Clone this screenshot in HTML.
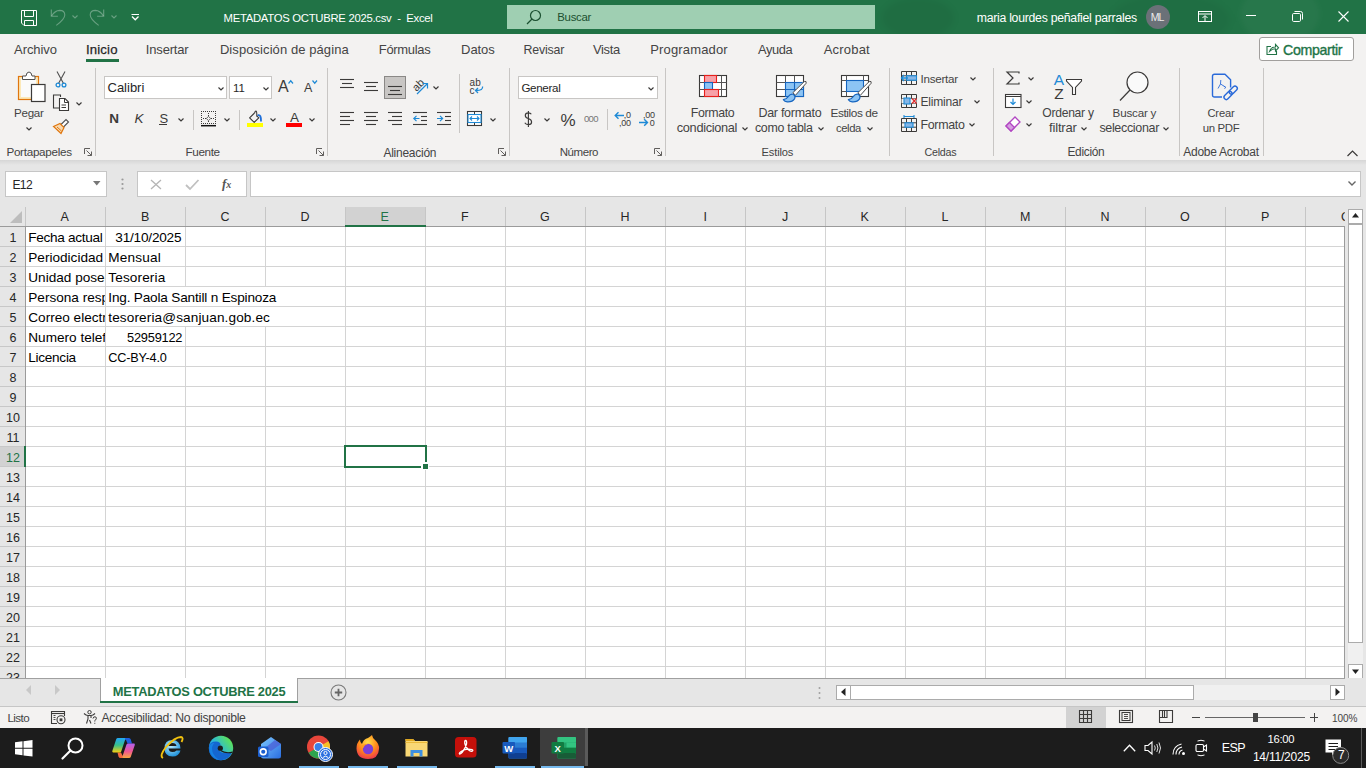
<!DOCTYPE html><html><head><meta charset="utf-8"><style>
html,body{margin:0;padding:0;width:1366px;height:768px;overflow:hidden;background:#f3f2f1}
.a{position:absolute}
.t{position:absolute;font-family:"Liberation Sans",sans-serif;white-space:pre;line-height:1}
svg{overflow:visible}
</style></head><body>
<div class="a" style="left:0px;top:0px;width:1366px;height:34px;background:#217346;"></div>
<div class="a" style="left:0;top:0;width:1366px;height:34px;overflow:hidden"><svg class="a" style="left:860px;top:0px;filter:blur(3px)" width="506" height="33"><ellipse cx="58" cy="18" rx="36" ry="20" fill="rgba(0,0,0,0.05)"/><ellipse cx="310" cy="20" rx="60" ry="26" fill="rgba(0,0,0,0.04)"/><ellipse cx="420" cy="14" rx="40" ry="30" fill="rgba(255,255,255,0.03)"/></svg></div>
<div class="a" style="left:0px;top:34px;width:1366px;height:126px;background:#f3f2f1;"></div>
<div class="a" style="left:0px;top:160px;width:1366px;height:47px;background:#e6e6e6;"></div>
<div class="a" style="left:0px;top:160px;width:1366px;height:5px;background:linear-gradient(#d6d6d6,#e6e6e6);"></div>
<div class="t" style="left:223.50px;top:13.00px;font-size:11.323412698412698px;color:#ffffff;letter-spacing:-0.286px;">METADATOS OCTUBRE 2025.csv  -  Excel</div>
<div class="a" style="left:507px;top:5px;width:368px;height:24px;background:#9fcfb2;"></div>
<div class="t" style="left:557.30px;top:12.00px;font-size:11.414634146341463px;color:#1b4f30;letter-spacing:-0.300px;">Buscar</div>
<div class="t" style="left:976.70px;top:12.00px;font-size:12.273743016759777px;color:#ffffff;letter-spacing:-0.267px;">maria lourdes peñafiel parrales</div>
<div class="a" style="left:1146px;top:5px;width:24px;height:24px;border-radius:50%;background:#6b7178"></div>
<div class="t" style="left:1150.80px;top:12.00px;font-size:10.514705882352942px;color:#ececec;letter-spacing:-1.000px;">ML</div>
<div class="t" style="left:14.10px;top:43.00px;font-size:13px;color:#444444;letter-spacing:-0.083px;">Archivo</div>
<div class="t" style="left:85.90px;top:43.00px;font-size:13.173333333333328px;color:#262626;letter-spacing:0.180px;-webkit-text-stroke:0.25px #262626;">Inicio</div>
<div class="t" style="left:145.80px;top:43.00px;font-size:13px;color:#444444;letter-spacing:-0.171px;">Insertar</div>
<div class="t" style="left:219.90px;top:43.00px;font-size:13px;color:#444444;letter-spacing:0.080px;">Disposición de página</div>
<div class="t" style="left:378.80px;top:44.00px;font-size:12.97636363636364px;color:#444444;letter-spacing:-0.314px;">Fórmulas</div>
<div class="t" style="left:461.10px;top:43.00px;font-size:13px;color:#444444;letter-spacing:-0.075px;">Datos</div>
<div class="t" style="left:523.40px;top:44.00px;font-size:12.39333333333334px;color:#444444;letter-spacing:-0.150px;">Revisar</div>
<div class="t" style="left:593.00px;top:44.00px;font-size:12.955172413793123px;color:#444444;letter-spacing:-0.325px;">Vista</div>
<div class="t" style="left:650.30px;top:43.00px;font-size:13px;color:#444444;letter-spacing:0.150px;">Programador</div>
<div class="t" style="left:758.00px;top:44.00px;font-size:12.859459459459453px;color:#444444;letter-spacing:-0.400px;">Ayuda</div>
<div class="t" style="left:823.70px;top:43.00px;font-size:13px;color:#444444;letter-spacing:0.200px;">Acrobat</div>
<div class="a" style="left:86px;top:59px;width:33px;height:3px;background:#217346;"></div>
<div class="a" style="left:1259px;top:37px;width:93px;height:22px;border:1px solid #a19f9d;border-radius:3px;background:#ffffff"></div>
<div class="t" style="left:1283.00px;top:43.00px;font-size:14.20546875px;color:#217346;letter-spacing:-0.338px;-webkit-text-stroke:0.35px #217346;">Compartir</div>
<div class="t" style="left:6.40px;top:146.00px;font-size:11.689189189189188px;color:#444444;letter-spacing:-0.282px;">Portapapeles</div>
<div class="t" style="left:185.50px;top:146.00px;font-size:11.73076923076923px;color:#444444;letter-spacing:-0.380px;">Fuente</div>
<div class="t" style="left:383.40px;top:147.00px;font-size:11.982758620689664px;color:#444444;letter-spacing:-0.233px;">Alineación</div>
<div class="t" style="left:559.70px;top:147.00px;font-size:11.499999999999995px;color:#444444;letter-spacing:-0.420px;">Número</div>
<div class="t" style="left:761.60px;top:147.00px;font-size:11.118421052631577px;color:#444444;letter-spacing:-0.167px;">Estilos</div>
<div class="t" style="left:924.60px;top:147.00px;font-size:10.687499999999979px;color:#444444;letter-spacing:-0.260px;">Celdas</div>
<div class="t" style="left:1067.40px;top:147.00px;font-size:11.920731707317058px;color:#444444;letter-spacing:-0.283px;">Edición</div>
<div class="t" style="left:1183.20px;top:146.00px;font-size:12.003012048192756px;color:#444444;letter-spacing:-0.242px;">Adobe Acrobat</div>
<div class="a" style="left:95px;top:68px;width:1px;height:88px;background:#c8c6c4;"></div>
<div class="a" style="left:327px;top:68px;width:1px;height:88px;background:#c8c6c4;"></div>
<div class="a" style="left:509px;top:68px;width:1px;height:88px;background:#c8c6c4;"></div>
<div class="a" style="left:665px;top:68px;width:1px;height:88px;background:#c8c6c4;"></div>
<div class="a" style="left:889px;top:68px;width:1px;height:88px;background:#c8c6c4;"></div>
<div class="a" style="left:993px;top:68px;width:1px;height:88px;background:#c8c6c4;"></div>
<div class="a" style="left:1179px;top:68px;width:1px;height:88px;background:#c8c6c4;"></div>
<div class="a" style="left:1263px;top:68px;width:1px;height:88px;background:#c8c6c4;"></div>
<div class="t" style="left:14.00px;top:108.00px;font-size:11.588571428571427px;color:#444444;letter-spacing:-0.250px;">Pegar</div>
<div class="t" style="left:690.80px;top:107.00px;font-size:12.377083333333358px;color:#444444;letter-spacing:-0.350px;">Formato</div>
<div class="t" style="left:676.80px;top:122.00px;font-size:12.760000000000014px;color:#444444;letter-spacing:-0.320px;">condicional</div>
<div class="t" style="left:758.40px;top:107.00px;font-size:12.4913043478261px;color:#444444;letter-spacing:-0.270px;">Dar formato</div>
<div class="t" style="left:754.90px;top:122.00px;font-size:12.410937499999996px;color:#444444;letter-spacing:-0.289px;">como tabla</div>
<div class="t" style="left:830.50px;top:108.00px;font-size:11.839285714285705px;color:#444444;letter-spacing:-0.411px;">Estilos de</div>
<div class="t" style="left:835.90px;top:123.00px;font-size:11.253124999999999px;color:#444444;letter-spacing:-0.375px;">celda</div>
<div class="t" style="left:1042.30px;top:107.00px;font-size:12.148275862068955px;color:#444444;letter-spacing:-0.275px;">Ordenar y</div>
<div class="t" style="left:1049.00px;top:121.00px;font-size:13px;color:#444444;letter-spacing:-0.167px;">filtrar</div>
<div class="t" style="left:1112.60px;top:107.00px;font-size:11.649019607843174px;color:#444444;letter-spacing:-0.200px;">Buscar y</div>
<div class="t" style="left:1099.40px;top:122.00px;font-size:12.52727272727271px;color:#444444;letter-spacing:-0.340px;">seleccionar</div>
<div class="t" style="left:1207.50px;top:108.00px;font-size:11.187878787878805px;color:#444444;letter-spacing:-0.200px;">Crear</div>
<div class="t" style="left:1202.80px;top:123.00px;font-size:11.434090909090923px;color:#444444;letter-spacing:-0.360px;">un PDF</div>
<div class="t" style="left:920.50px;top:73.00px;font-size:11.642222222222237px;color:#444444;letter-spacing:-0.257px;">Insertar</div>
<div class="t" style="left:920.50px;top:96.00px;font-size:12.052083333333329px;color:#444444;letter-spacing:-0.229px;">Eliminar</div>
<div class="t" style="left:920.50px;top:119.00px;font-size:12.431250000000006px;color:#444444;letter-spacing:-0.317px;">Formato</div>
<div class="a" style="left:104px;top:76px;width:121px;height:21px;border:1px solid #c8c6c4;background:#fff"></div>
<div class="a" style="left:229px;top:76px;width:41px;height:21px;border:1px solid #c8c6c4;background:#fff"></div>
<div class="a" style="left:518px;top:76px;width:138px;height:21px;border:1px solid #c8c6c4;background:#fff"></div>
<div class="t" style="left:107.50px;top:81.00px;font-size:13px;color:#262626;">Calibri</div>
<div class="t" style="left:233.00px;top:83.00px;font-size:11.421428571428573px;color:#262626;">11</div>
<div class="t" style="left:521.40px;top:83.00px;font-size:11.58695652173913px;color:#262626;letter-spacing:-0.300px;">General</div>
<div class="a" style="left:5px;top:171px;width:100px;height:24px;border:1px solid #c6c6c6;background:#fff"></div>
<div class="t" style="left:12.40px;top:179.00px;font-size:12.095652173913045px;color:#262626;letter-spacing:-0.600px;">E12</div>
<div class="a" style="left:137px;top:171px;width:108px;height:24px;border:1px solid #c6c6c6;background:#fff"></div>
<div class="a" style="left:250px;top:171px;width:1109px;height:24px;border:1px solid #c6c6c6;background:#fff"></div>
<div class="a" style="left:0px;top:207px;width:1345px;height:20px;background:#e6e6e6;"></div>
<div class="a" style="left:26px;top:227px;width:1319px;height:451px;background:#ffffff;"></div>
<div class="a" style="left:26px;top:227px;width:1319px;height:451px;background:repeating-linear-gradient(to right,transparent 0 79px,#d4d4d4 79px 80px),repeating-linear-gradient(to bottom,transparent 0 19px,#d4d4d4 19px 20px);"></div>
<div class="a" style="left:0px;top:227px;width:25px;height:451px;background:#e6e6e6;"></div>
<div class="a" style="left:0px;top:227px;width:25px;height:451px;background:repeating-linear-gradient(to bottom,transparent 0 19px,#c8c8c8 19px 20px);"></div>
<div class="a" style="left:25px;top:207px;width:1px;height:19px;background:#c6c6c6;"></div>
<div class="a" style="left:25px;top:226px;width:1px;height:452px;background:#9b9b9b;"></div>
<div class="a" style="left:0px;top:226px;width:1345px;height:1px;background:#9b9b9b;"></div>
<div class="a" style="left:1344px;top:227px;width:1px;height:451px;background:#9b9b9b;"></div>
<div class="a" style="left:105px;top:207px;width:1px;height:19px;background:#c6c6c6;"></div>
<div class="a" style="left:185px;top:207px;width:1px;height:19px;background:#c6c6c6;"></div>
<div class="a" style="left:265px;top:207px;width:1px;height:19px;background:#c6c6c6;"></div>
<div class="a" style="left:345px;top:207px;width:1px;height:19px;background:#c6c6c6;"></div>
<div class="a" style="left:425px;top:207px;width:1px;height:19px;background:#c6c6c6;"></div>
<div class="a" style="left:505px;top:207px;width:1px;height:19px;background:#c6c6c6;"></div>
<div class="a" style="left:585px;top:207px;width:1px;height:19px;background:#c6c6c6;"></div>
<div class="a" style="left:665px;top:207px;width:1px;height:19px;background:#c6c6c6;"></div>
<div class="a" style="left:745px;top:207px;width:1px;height:19px;background:#c6c6c6;"></div>
<div class="a" style="left:825px;top:207px;width:1px;height:19px;background:#c6c6c6;"></div>
<div class="a" style="left:905px;top:207px;width:1px;height:19px;background:#c6c6c6;"></div>
<div class="a" style="left:985px;top:207px;width:1px;height:19px;background:#c6c6c6;"></div>
<div class="a" style="left:1065px;top:207px;width:1px;height:19px;background:#c6c6c6;"></div>
<div class="a" style="left:1145px;top:207px;width:1px;height:19px;background:#c6c6c6;"></div>
<div class="a" style="left:1225px;top:207px;width:1px;height:19px;background:#c6c6c6;"></div>
<div class="a" style="left:1305px;top:207px;width:1px;height:19px;background:#c6c6c6;"></div>
<svg class="a" style="left:10px;top:211px;" width="13" height="13" viewBox="0 0 13 13"><path d="M12 0 L12 12 L0 12 Z" fill="#bdbdbd"/></svg>
<div class="a" style="left:346px;top:207px;width:79px;height:19px;background:#d2d2d2;"></div>
<div class="a" style="left:345px;top:225px;width:81px;height:2px;background:#217346;"></div>
<div class="a" style="left:0px;top:447px;width:25px;height:19px;background:#d2d2d2;"></div>
<div class="a" style="left:24px;top:446px;width:2px;height:21px;background:#217346;"></div>
<div class="t" style="left:60.50px;top:211.00px;font-size:12.5px;color:#262626;">A</div>
<div class="t" style="left:141.00px;top:211.00px;font-size:12.5px;color:#262626;">B</div>
<div class="t" style="left:220.50px;top:211.00px;font-size:12.5px;color:#262626;">C</div>
<div class="t" style="left:300.50px;top:211.00px;font-size:12.5px;color:#262626;">D</div>
<div class="t" style="left:380.50px;top:211.00px;font-size:12.5px;color:#217346;">E</div>
<div class="t" style="left:461.00px;top:211.00px;font-size:12.5px;color:#262626;">F</div>
<div class="t" style="left:540.00px;top:211.00px;font-size:12.5px;color:#262626;">G</div>
<div class="t" style="left:620.50px;top:211.00px;font-size:12.5px;color:#262626;">H</div>
<div class="t" style="left:703.50px;top:211.00px;font-size:12.5px;color:#262626;">I</div>
<div class="t" style="left:782.00px;top:211.00px;font-size:12.5px;color:#262626;">J</div>
<div class="t" style="left:860.50px;top:211.00px;font-size:12.5px;color:#262626;">K</div>
<div class="t" style="left:941.50px;top:211.00px;font-size:12.5px;color:#262626;">L</div>
<div class="t" style="left:1020.00px;top:211.00px;font-size:12.5px;color:#262626;">M</div>
<div class="t" style="left:1100.50px;top:211.00px;font-size:12.5px;color:#262626;">N</div>
<div class="t" style="left:1180.00px;top:211.00px;font-size:12.5px;color:#262626;">O</div>
<div class="t" style="left:1261.00px;top:211.00px;font-size:12.5px;color:#262626;">P</div>
<div class="t" style="left:1341.00px;top:211.00px;font-size:12.5px;color:#262626;clip-path:inset(0 6px 0 0);">Q</div>
<div class="t" style="left:9.50px;top:232.00px;font-size:12.5px;color:#262626;">1</div>
<div class="t" style="left:9.50px;top:252.00px;font-size:12.5px;color:#262626;">2</div>
<div class="t" style="left:9.50px;top:272.00px;font-size:12.5px;color:#262626;">3</div>
<div class="t" style="left:9.50px;top:292.00px;font-size:12.5px;color:#262626;">4</div>
<div class="t" style="left:9.50px;top:312.00px;font-size:12.5px;color:#262626;">5</div>
<div class="t" style="left:9.50px;top:332.00px;font-size:12.5px;color:#262626;">6</div>
<div class="t" style="left:9.50px;top:352.00px;font-size:12.5px;color:#262626;">7</div>
<div class="t" style="left:9.50px;top:372.00px;font-size:12.5px;color:#262626;">8</div>
<div class="t" style="left:9.50px;top:392.00px;font-size:12.5px;color:#262626;">9</div>
<div class="t" style="left:6.00px;top:412.00px;font-size:12.5px;color:#262626;">10</div>
<div class="t" style="left:6.50px;top:432.00px;font-size:12.5px;color:#262626;">11</div>
<div class="t" style="left:6.00px;top:452.00px;font-size:12.5px;color:#217346;">12</div>
<div class="t" style="left:6.00px;top:472.00px;font-size:12.5px;color:#262626;">13</div>
<div class="t" style="left:6.00px;top:492.00px;font-size:12.5px;color:#262626;">14</div>
<div class="t" style="left:6.00px;top:512.00px;font-size:12.5px;color:#262626;">15</div>
<div class="t" style="left:6.00px;top:532.00px;font-size:12.5px;color:#262626;">16</div>
<div class="t" style="left:6.00px;top:552.00px;font-size:12.5px;color:#262626;">17</div>
<div class="t" style="left:6.00px;top:572.00px;font-size:12.5px;color:#262626;">18</div>
<div class="t" style="left:6.00px;top:592.00px;font-size:12.5px;color:#262626;">19</div>
<div class="t" style="left:6.00px;top:612.00px;font-size:12.5px;color:#262626;">20</div>
<div class="t" style="left:6.00px;top:632.00px;font-size:12.5px;color:#262626;">21</div>
<div class="t" style="left:6.00px;top:652.00px;font-size:12.5px;color:#262626;">22</div>
<div class="t" style="left:6.00px;top:672.00px;font-size:12.5px;color:#262626;">23</div>
<div class="a" style="left:0px;top:678px;width:1345px;height:28px;background:#e6e6e6;"></div>
<div class="a" style="left:185px;top:287px;width:160px;height:19px;background:#ffffff;"></div>
<div class="a" style="left:185px;top:307px;width:160px;height:19px;background:#ffffff;"></div>
<div class="t" style="left:28.30px;top:231.00px;font-size:13.6px;color:#000000;letter-spacing:-0.300px;width:77.0px;overflow:hidden;">Fecha actual</div>
<div class="t" style="left:28.30px;top:251.00px;font-size:13.6px;color:#000000;width:77.0px;overflow:hidden;">Periodicidad</div>
<div class="t" style="left:28.30px;top:271.00px;font-size:13.6px;color:#000000;width:77.0px;overflow:hidden;">Unidad poseedora</div>
<div class="t" style="left:28.30px;top:291.00px;font-size:13.6px;color:#000000;width:77.0px;overflow:hidden;">Persona responsable</div>
<div class="t" style="left:28.30px;top:311.00px;font-size:13.6px;color:#000000;width:77.0px;overflow:hidden;">Correo electronico</div>
<div class="t" style="left:28.30px;top:331.00px;font-size:13.6px;color:#000000;width:77.0px;overflow:hidden;">Numero telefono</div>
<div class="t" style="left:28.30px;top:351.00px;font-size:13.6px;color:#000000;letter-spacing:-0.286px;width:77.0px;overflow:hidden;">Licencia</div>
<div class="t" style="left:115.30px;top:231.00px;font-size:13.6px;color:#000000;letter-spacing:-0.200px;">31/10/2025</div>
<div class="t" style="left:108.30px;top:251.00px;font-size:13.6px;color:#000000;letter-spacing:0.167px;">Mensual</div>
<div class="t" style="left:108.30px;top:271.00px;font-size:13.6px;color:#000000;letter-spacing:0.125px;">Tesoreria</div>
<div class="t" style="left:108.30px;top:291.00px;font-size:13.6px;color:#000000;letter-spacing:-0.179px;">Ing. Paola Santill n Espinoza</div>
<div class="t" style="left:108.30px;top:311.00px;font-size:13.6px;color:#000000;letter-spacing:0.117px;">tesoreria@sanjuan.gob.ec</div>
<div class="t" style="left:127.10px;top:332.00px;font-size:12.819672131147541px;color:#000000;letter-spacing:-0.229px;">52959122</div>
<div class="t" style="left:108.30px;top:352.00px;font-size:12.70030769230769px;color:#000000;letter-spacing:-0.213px;">CC-BY-4.0</div>
<div class="a" style="left:344px;top:445px;width:79px;height:19px;border:2px solid #217346"></div>
<div class="a" style="left:421px;top:462px;width:8px;height:8px;background:#ffffff;"></div>
<div class="a" style="left:423px;top:464px;width:5px;height:5px;background:#217346;"></div>
<div class="a" style="left:1345px;top:207px;width:21px;height:471px;background:#e6e6e6;"></div>
<div class="a" style="left:1348px;top:209px;width:15px;height:469px;background:#f0f0f0;"></div>
<div class="a" style="left:1348px;top:209px;width:13px;height:13px;border:1px solid #ababab;background:#fff"></div>
<div class="a" style="left:1348px;top:224px;width:13px;height:417px;border:1px solid #ababab;background:#fff"></div>
<div class="a" style="left:1348px;top:664px;width:13px;height:13px;border:1px solid #ababab;background:#fff"></div>
<svg class="a" style="left:1352px;top:213px;" width="7" height="5" viewBox="0 0 7 5"><path d="M0 4.5 L3.5 0 L7 4.5Z" fill="#222"/></svg>
<svg class="a" style="left:1352px;top:669px;" width="7" height="5" viewBox="0 0 7 5"><path d="M0 0.5 L3.5 5 L7 0.5Z" fill="#222"/></svg>
<div class="a" style="left:0px;top:678px;width:1366px;height:28px;background:#e6e6e6;"></div>
<div class="a" style="left:0px;top:678px;width:100px;height:1px;background:#a0a0a0;"></div>
<div class="a" style="left:298px;top:678px;width:1047px;height:1px;background:#a0a0a0;"></div>
<div class="a" style="left:100px;top:678px;width:198px;height:25px;background:#ffffff;"></div>
<div class="a" style="left:100px;top:678px;width:1px;height:25px;background:#a0a0a0;"></div>
<div class="a" style="left:297px;top:678px;width:1px;height:25px;background:#a0a0a0;"></div>
<div class="a" style="left:100px;top:701px;width:198px;height:2px;background:#217346;"></div>
<div class="t" style="left:112.80px;top:686.00px;font-size:12.849171270718234px;color:#217346;letter-spacing:-0.257px;font-weight:bold;">METADATOS OCTUBRE 2025</div>
<svg class="a" style="left:26px;top:685px;" width="6" height="10" viewBox="0 0 6 10"><path d="M5 0 L0 5 L5 10Z" fill="#c8c8c8"/></svg>
<svg class="a" style="left:55px;top:685px;" width="6" height="10" viewBox="0 0 6 10"><path d="M0 0 L5 5 L0 10Z" fill="#c8c8c8"/></svg>
<svg class="a" style="left:330px;top:684px;" width="17" height="17" viewBox="0 0 17 17"><circle cx="8.5" cy="8.5" r="7.5" fill="none" stroke="#7a7a7a" stroke-width="1.1"/><path d="M8.5 4.8 V12.2 M4.8 8.5 H12.2" stroke="#666" stroke-width="1.8"/></svg>
<svg class="a" style="left:818px;top:686px;" width="3" height="14" viewBox="0 0 3 14"><circle cx="1.5" cy="2" r="1" fill="#a0a0a0"/><circle cx="1.5" cy="7" r="1" fill="#a0a0a0"/><circle cx="1.5" cy="12" r="1" fill="#a0a0a0"/></svg>
<div class="a" style="left:836px;top:685px;width:508px;height:15px;background:#f0f0f0;"></div>
<div class="a" style="left:836px;top:685px;width:13px;height:13px;border:1px solid #ababab;background:#fff"></div>
<div class="a" style="left:850px;top:685px;width:342px;height:13px;border:1px solid #ababab;background:#fff"></div>
<div class="a" style="left:1330px;top:685px;width:13px;height:13px;border:1px solid #ababab;background:#fff"></div>
<svg class="a" style="left:841px;top:688px;" width="5" height="8" viewBox="0 0 5 8"><path d="M4.5 0 L0 4 L4.5 8Z" fill="#222"/></svg>
<svg class="a" style="left:1335px;top:688px;" width="5" height="8" viewBox="0 0 5 8"><path d="M0.5 0 L5 4 L0.5 8Z" fill="#222"/></svg>
<div class="a" style="left:0px;top:706px;width:1366px;height:1px;background:#d0d0d0;"></div>
<div class="a" style="left:0px;top:707px;width:1366px;height:21px;background:#f3f2f1;"></div>
<div class="t" style="left:7.40px;top:713.00px;font-size:11.586538461538462px;color:#444444;letter-spacing:-0.525px;">Listo</div>
<div class="t" style="left:101.50px;top:712.00px;font-size:12.259615384615385px;color:#444444;letter-spacing:-0.300px;">Accesibilidad: No disponible</div>
<div class="a" style="left:1066px;top:707px;width:40px;height:21px;background:#d2d2d2;"></div>
<div class="t" style="left:1331.90px;top:714.00px;font-size:10.075757575757576px;color:#444444;letter-spacing:-0.100px;">100%</div>
<div class="a" style="left:1205px;top:717px;width:100px;height:1px;background:#666;"></div>
<div class="a" style="left:1253px;top:713px;width:5px;height:9px;background:#444;"></div>
<div class="a" style="left:1192px;top:717px;width:8px;height:1px;background:#444;"></div>
<div class="a" style="left:1310px;top:717px;width:8px;height:1px;background:#444;"></div>
<div class="a" style="left:1313.5px;top:713px;width:1px;height:9px;background:#444;"></div>
<div class="a" style="left:0px;top:728px;width:1366px;height:40px;background:#1c1c1c;"></div>
<div class="a" style="left:540px;top:728px;width:45px;height:38px;background:#3d3d3d;"></div>
<div class="t" style="left:1267.50px;top:734.00px;font-size:11.24px;color:#ffffff;letter-spacing:-0.275px;">16:00</div>
<div class="t" style="left:1252.90px;top:751.00px;font-size:12px;color:#ffffff;letter-spacing:-0.211px;">14/11/2025</div>
<div class="t" style="left:1221.70px;top:742.00px;font-size:12px;color:#ffffff;letter-spacing:-0.6px;font-size:12.5px">ESP</div>
<div class="a" style="left:299px;top:766px;width:40px;height:2px;background:#76b9ed;"></div>
<div class="a" style="left:348px;top:766px;width:40px;height:2px;background:#76b9ed;"></div>
<div class="a" style="left:397px;top:766px;width:40px;height:2px;background:#76b9ed;"></div>
<div class="a" style="left:495px;top:766px;width:40px;height:2px;background:#76b9ed;"></div>
<div class="a" style="left:541px;top:766px;width:43px;height:2px;background:#76b9ed;"></div>
<svg class="a" style="left:21px;top:10px;" width="17" height="17" viewBox="0 0 17 17"><path d="M0.5 0.5 H15.5 V15.5 H3 L0.5 13 Z M3.5 0.5 V6.5 H12.5 V0.5 M3.5 15.5 V10.5 H12.5 V15.5" fill="none" stroke="#fff" stroke-width="1"/></svg>
<svg class="a" style="left:50px;top:9px;" width="17" height="18" viewBox="0 0 17 18"><path d="M1.3 0.4 V7.3 H7.9" fill="none" stroke="rgba(255,255,255,0.32)" stroke-width="1.1"/><path d="M1.6 7 Q5 1.5 9.5 1.4 Q14.8 1.5 14.8 6 Q14.8 10 6.3 16.4" fill="none" stroke="rgba(255,255,255,0.32)" stroke-width="1.1"/></svg>
<svg class="a" style="left:72px;top:14.5px;" width="6" height="3.5" viewBox="0 0 6 3.5"><path d="M0.5 0.5 L3.0 3.0 L5.5 0.5" fill="none" stroke="rgba(255,255,255,0.32)" stroke-width="1.1"/></svg>
<svg class="a" style="left:89px;top:9px;" width="17" height="18" viewBox="0 0 17 18"><path d="M14.7 0.4 V7.3 H8.1" fill="none" stroke="rgba(255,255,255,0.32)" stroke-width="1.1"/><path d="M14.4 7 Q11 1.5 6.5 1.4 Q1.2 1.5 1.2 6 Q1.2 10 9.7 16.4" fill="none" stroke="rgba(255,255,255,0.32)" stroke-width="1.1"/></svg>
<svg class="a" style="left:110.5px;top:14.5px;" width="6" height="3.5" viewBox="0 0 6 3.5"><path d="M0.5 0.5 L3.0 3.0 L5.5 0.5" fill="none" stroke="rgba(255,255,255,0.32)" stroke-width="1.1"/></svg>
<svg class="a" style="left:131px;top:13px;" width="9" height="8" viewBox="0 0 9 8"><path d="M0.5 1.5 H8" stroke="#fff" stroke-width="1"/><path d="M1 3.5 L4.25 6.8 L7.5 3.5" fill="none" stroke="#fff" stroke-width="1.3"/></svg>
<svg class="a" style="left:526px;top:9px;" width="16" height="16" viewBox="0 0 16 16"><circle cx="9.5" cy="6.5" r="5" fill="none" stroke="#1b4f30" stroke-width="1.2"/><path d="M6 10 L1 15" stroke="#1b4f30" stroke-width="1.3"/></svg>
<svg class="a" style="left:1198px;top:11px;" width="14" height="11" viewBox="0 0 14 11"><rect x="0.5" y="0.5" width="13" height="10" fill="none" stroke="#fff" stroke-width="1"/><path d="M0.5 3 H13.5" stroke="#fff" stroke-width="1"/><path d="M7 10 V5 M4.5 7 L7 4.5 L9.5 7" fill="none" stroke="#fff" stroke-width="1"/></svg>
<div class="a" style="left:1246px;top:15px;width:10px;height:1px;background:#fff;"></div>
<svg class="a" style="left:1292px;top:11px;" width="11" height="11" viewBox="0 0 11 11"><rect x="0.5" y="2.5" width="8" height="8" rx="1.2" fill="none" stroke="#fff" stroke-width="1"/><path d="M2.5 0.5 H8.5 Q10.5 0.5 10.5 2.5 V8.5" fill="none" stroke="#fff" stroke-width="1"/></svg>
<svg class="a" style="left:1338px;top:11px;" width="11" height="11" viewBox="0 0 11 11"><path d="M0.5 0.5 L10.5 10.5 M10.5 0.5 L0.5 10.5" stroke="#fff" stroke-width="1.1"/></svg>
<svg class="a" style="left:1266px;top:43px;" width="13" height="12" viewBox="0 0 13 12"><path d="M5 3.5 H1 V11.5 H10.5 V8" fill="none" stroke="#217346" stroke-width="1.1"/><path d="M3.5 8.5 Q4.5 4 9.5 4 V1.5 L12.5 4.8 L9.5 8 V5.8 Q6 5.8 3.5 8.5Z" fill="none" stroke="#217346" stroke-width="1.1"/></svg>
<svg class="a" style="left:18px;top:71px;" width="28" height="32" viewBox="0 0 28 32"><rect x="0.5" y="5.5" width="20" height="23" fill="#fce9b9" stroke="#e0760e" stroke-width="1.2"/><rect x="3" y="8" width="15" height="18" fill="#fafafa"/><path d="M4.5 8.5 V5 H8 Q8.5 1 11 1 Q13.5 1 14 5 H17 V8.5 Z" fill="#fff" stroke="#505050" stroke-width="1"/><rect x="13.5" y="13.5" width="13.5" height="17" fill="#fff" stroke="#3b3a39" stroke-width="1.2"/></svg>
<svg class="a" style="left:25.5px;top:126.5px;" width="6" height="3.5" viewBox="0 0 6 3.5"><path d="M0.5 0.5 L3.0 3.0 L5.5 0.5" fill="none" stroke="#3b3a39" stroke-width="1.2"/></svg>
<svg class="a" style="left:55px;top:71px;" width="12" height="17" viewBox="0 0 12 17"><path d="M2 0.5 L8.5 12.5 M10 0.5 L3.5 12.5" stroke="#505050" stroke-width="1.1"/><circle cx="3" cy="14" r="1.9" fill="none" stroke="#1e8ad6" stroke-width="1.3"/><circle cx="9" cy="14" r="1.9" fill="none" stroke="#1e8ad6" stroke-width="1.3"/></svg>
<svg class="a" style="left:53px;top:94px;" width="17" height="18" viewBox="0 0 17 18"><path d="M7.5 3 V1 H0.5 V14 H6" fill="none" stroke="#3b3a39" stroke-width="1.1"/><path d="M6.5 4.5 H12 L15.5 8 V16.5 H6.5 Z" fill="#fff" stroke="#3b3a39" stroke-width="1.1"/><path d="M11.5 4.5 V8.5 H15.5 M8.5 11 H13 M8.5 13.5 H13" fill="none" stroke="#3b3a39" stroke-width="1"/></svg>
<svg class="a" style="left:76px;top:101.5px;" width="6" height="3.5" viewBox="0 0 6 3.5"><path d="M0.5 0.5 L3.0 3.0 L5.5 0.5" fill="none" stroke="#3b3a39" stroke-width="1.2"/></svg>
<svg class="a" style="left:53px;top:118px;" width="17" height="16" viewBox="0 0 17 16"><path d="M7.5 7 L13 1.5 L15.5 4 L10 9.5" fill="#fff" stroke="#505050" stroke-width="1.1"/><path d="M0.5 8.5 L7 5.5 L11 9.5 L8 15.5 Z" fill="#f7d9b0" stroke="#e0760e" stroke-width="1.2"/><path d="M4 9 L8.5 13" stroke="#e0760e" stroke-width="1"/></svg>
<svg class="a" style="left:84px;top:148px;" width="9" height="9" viewBox="0 0 9 9"><path d="M0.5 6 V0.5 H6" fill="none" stroke="#605e5c" stroke-width="1"/><path d="M2.5 2.5 L7.5 7.5 M3.5 7.5 H7.5 V3.5" fill="none" stroke="#605e5c" stroke-width="1"/></svg>
<svg class="a" style="left:316px;top:148px;" width="9" height="9" viewBox="0 0 9 9"><path d="M0.5 6 V0.5 H6" fill="none" stroke="#605e5c" stroke-width="1"/><path d="M2.5 2.5 L7.5 7.5 M3.5 7.5 H7.5 V3.5" fill="none" stroke="#605e5c" stroke-width="1"/></svg>
<svg class="a" style="left:498px;top:148px;" width="9" height="9" viewBox="0 0 9 9"><path d="M0.5 6 V0.5 H6" fill="none" stroke="#605e5c" stroke-width="1"/><path d="M2.5 2.5 L7.5 7.5 M3.5 7.5 H7.5 V3.5" fill="none" stroke="#605e5c" stroke-width="1"/></svg>
<svg class="a" style="left:654px;top:148px;" width="9" height="9" viewBox="0 0 9 9"><path d="M0.5 6 V0.5 H6" fill="none" stroke="#605e5c" stroke-width="1"/><path d="M2.5 2.5 L7.5 7.5 M3.5 7.5 H7.5 V3.5" fill="none" stroke="#605e5c" stroke-width="1"/></svg>
<svg class="a" style="left:217.5px;top:87px;" width="6" height="3.5" viewBox="0 0 6 3.5"><path d="M0.5 0.5 L3.0 3.0 L5.5 0.5" fill="none" stroke="#3b3a39" stroke-width="1.2"/></svg>
<svg class="a" style="left:262.5px;top:87px;" width="6" height="3.5" viewBox="0 0 6 3.5"><path d="M0.5 0.5 L3.0 3.0 L5.5 0.5" fill="none" stroke="#3b3a39" stroke-width="1.2"/></svg>
<div class="t" style="left:278.00px;top:79.00px;font-size:16px;color:#3b3a39;">A</div>
<svg class="a" style="left:288px;top:80px;" width="6" height="4" viewBox="0 0 6 4"><path d="M0.5 3.5 L2.75 0.8 L5 3.5" fill="none" stroke="#1e8ad6" stroke-width="1.2"/></svg>
<div class="t" style="left:304.00px;top:82.00px;font-size:12.5px;color:#3b3a39;">A</div>
<svg class="a" style="left:312px;top:80px;" width="6" height="4" viewBox="0 0 6 4"><path d="M0.5 0.5 L2.75 3.2 L5 0.5" fill="none" stroke="#1e8ad6" stroke-width="1.2"/></svg>
<div class="t" style="left:109.30px;top:112.00px;font-size:13.5px;color:#3b3a39;font-weight:bold;">N</div>
<div class="t" style="left:134.60px;top:112.00px;font-size:13.5px;color:#3b3a39;font-style:italic;">K</div>
<div class="t" style="left:159.60px;top:112.00px;font-size:13px;color:#3b3a39;">S</div>
<div class="a" style="left:159px;top:124px;width:8px;height:1px;background:#3b3a39;"></div>
<svg class="a" style="left:177.5px;top:117.5px;" width="6" height="3.5" viewBox="0 0 6 3.5"><path d="M0.5 0.5 L3.0 3.0 L5.5 0.5" fill="none" stroke="#3b3a39" stroke-width="1.2"/></svg>
<div class="a" style="left:193px;top:110px;width:1px;height:20px;background:#c8c6c4;"></div>
<svg class="a" style="left:201px;top:110px;" width="16" height="17" viewBox="0 0 16 17"><g fill="#3b3a39"><rect x="0" y="1" width="1" height="1"/><rect x="0" y="13" width="1" height="1"/><rect x="2" y="1" width="1" height="1"/><rect x="2" y="13" width="1" height="1"/><rect x="4" y="1" width="1" height="1"/><rect x="4" y="13" width="1" height="1"/><rect x="6" y="1" width="1" height="1"/><rect x="6" y="13" width="1" height="1"/><rect x="8" y="1" width="1" height="1"/><rect x="8" y="13" width="1" height="1"/><rect x="10" y="1" width="1" height="1"/><rect x="10" y="13" width="1" height="1"/><rect x="12" y="1" width="1" height="1"/><rect x="12" y="13" width="1" height="1"/><rect x="14" y="1" width="1" height="1"/><rect x="14" y="13" width="1" height="1"/><rect x="0" y="3" width="1" height="1"/><rect x="14" y="3" width="1" height="1"/><rect x="0" y="5" width="1" height="1"/><rect x="14" y="5" width="1" height="1"/><rect x="0" y="7" width="1" height="1"/><rect x="14" y="7" width="1" height="1"/><rect x="0" y="9" width="1" height="1"/><rect x="14" y="9" width="1" height="1"/><rect x="0" y="11" width="1" height="1"/><rect x="14" y="11" width="1" height="1"/><rect x="7" y="3" width="1" height="1"/><rect x="7" y="5" width="1" height="1"/><rect x="7" y="11" width="1" height="1"/><rect x="2" y="8" width="1" height="1"/><rect x="4" y="8" width="1" height="1"/><rect x="10" y="8" width="1" height="1"/><rect x="12" y="8" width="1" height="1"/></g><rect x="6" y="7" width="3" height="3" fill="none" stroke="#3b3a39" stroke-width="0.7" transform="rotate(45 7.5 8.5)"/><path d="M0 15.7 H15" stroke="#111" stroke-width="1.5"/></svg>
<svg class="a" style="left:223.5px;top:117.5px;" width="6" height="3.5" viewBox="0 0 6 3.5"><path d="M0.5 0.5 L3.0 3.0 L5.5 0.5" fill="none" stroke="#3b3a39" stroke-width="1.2"/></svg>
<div class="a" style="left:239px;top:110px;width:1px;height:20px;background:#c8c6c4;"></div>
<svg class="a" style="left:248px;top:110px;" width="15" height="13" viewBox="0 0 15 13"><path d="M6.5 3 L1.6 7.8 L6.2 12.4 L10.8 7.8 L8.8 5.8" fill="none" stroke="#3b3a39" stroke-width="1.1" stroke-linejoin="round"/><path d="M6.6 3.2 Q7.2 0.6 8.3 1.3 Q8.9 1.8 8.8 6.5" fill="none" stroke="#3b3a39" stroke-width="1.1"/><path d="M10.3 5.2 Q13 4.5 13 10.8" fill="none" stroke="#1e6fd9" stroke-width="1.8" stroke-linecap="round"/></svg>
<div class="a" style="left:247px;top:123px;width:16px;height:4px;background:#ffff00;"></div>
<svg class="a" style="left:269.5px;top:117.5px;" width="6" height="3.5" viewBox="0 0 6 3.5"><path d="M0.5 0.5 L3.0 3.0 L5.5 0.5" fill="none" stroke="#3b3a39" stroke-width="1.2"/></svg>
<div class="t" style="left:290.00px;top:111.00px;font-size:13.5px;color:#3b3a39;">A</div>
<div class="a" style="left:286px;top:123px;width:16px;height:4px;background:#ff0000;"></div>
<svg class="a" style="left:308.5px;top:117.5px;" width="6" height="3.5" viewBox="0 0 6 3.5"><path d="M0.5 0.5 L3.0 3.0 L5.5 0.5" fill="none" stroke="#3b3a39" stroke-width="1.2"/></svg>
<svg class="a" style="left:340px;top:78px;" width="16" height="16" viewBox="0 0 16 16"><path d="M0 1.5 H14" stroke="#3b3a39" stroke-width="1.1"/><path d="M2 5.5 H12" stroke="#3b3a39" stroke-width="1.1"/><path d="M0 9.5 H14" stroke="#3b3a39" stroke-width="1.1"/></svg>
<svg class="a" style="left:364px;top:81px;" width="16" height="16" viewBox="0 0 16 16"><path d="M0 1.5 H14" stroke="#3b3a39" stroke-width="1.1"/><path d="M2 5.5 H12" stroke="#3b3a39" stroke-width="1.1"/><path d="M0 9.5 H14" stroke="#3b3a39" stroke-width="1.1"/></svg>
<div class="a" style="left:384px;top:76px;width:20px;height:21px;border:1px solid #8a8886;background:#c8c6c4"></div>
<svg class="a" style="left:388px;top:85px;" width="16" height="16" viewBox="0 0 16 16"><path d="M0 1.5 H14" stroke="#3b3a39" stroke-width="1.1"/><path d="M2 5.5 H12" stroke="#3b3a39" stroke-width="1.1"/><path d="M0 9.5 H14" stroke="#3b3a39" stroke-width="1.1"/></svg>
<svg class="a" style="left:340px;top:111px;" width="16" height="16" viewBox="0 0 16 16"><path d="M0 1.5 H14" stroke="#3b3a39" stroke-width="1.1"/><path d="M0 5.5 H10" stroke="#3b3a39" stroke-width="1.1"/><path d="M0 9.5 H14" stroke="#3b3a39" stroke-width="1.1"/><path d="M0 13.5 H10" stroke="#3b3a39" stroke-width="1.1"/></svg>
<svg class="a" style="left:364px;top:111px;" width="16" height="16" viewBox="0 0 16 16"><path d="M0 1.5 H14" stroke="#3b3a39" stroke-width="1.1"/><path d="M2 5.5 H12" stroke="#3b3a39" stroke-width="1.1"/><path d="M0 9.5 H14" stroke="#3b3a39" stroke-width="1.1"/><path d="M2 13.5 H12" stroke="#3b3a39" stroke-width="1.1"/></svg>
<svg class="a" style="left:388px;top:111px;" width="16" height="16" viewBox="0 0 16 16"><path d="M0 1.5 H14" stroke="#3b3a39" stroke-width="1.1"/><path d="M4 5.5 H14" stroke="#3b3a39" stroke-width="1.1"/><path d="M0 9.5 H14" stroke="#3b3a39" stroke-width="1.1"/><path d="M4 13.5 H14" stroke="#3b3a39" stroke-width="1.1"/></svg>
<svg class="a" style="left:413px;top:111px;" width="16" height="16" viewBox="0 0 16 16"><path d="M0 1.5 H14" stroke="#3b3a39" stroke-width="1.1"/><path d="M8 5.5 H14" stroke="#3b3a39" stroke-width="1.1"/><path d="M8 9.5 H14" stroke="#3b3a39" stroke-width="1.1"/><path d="M0 13.5 H14" stroke="#3b3a39" stroke-width="1.1"/></svg>
<svg class="a" style="left:437px;top:111px;" width="16" height="16" viewBox="0 0 16 16"><path d="M0 1.5 H14" stroke="#3b3a39" stroke-width="1.1"/><path d="M8 5.5 H14" stroke="#3b3a39" stroke-width="1.1"/><path d="M8 9.5 H14" stroke="#3b3a39" stroke-width="1.1"/><path d="M0 13.5 H14" stroke="#3b3a39" stroke-width="1.1"/></svg>
<svg class="a" style="left:413px;top:114px;" width="8" height="9" viewBox="0 0 8 9"><path d="M6.5 4.5 H0.8 M3.5 1.8 L0.8 4.5 L3.5 7.2" fill="none" stroke="#1e8ad6" stroke-width="1.15"/></svg>
<svg class="a" style="left:437px;top:114px;" width="8" height="9" viewBox="0 0 8 9"><path d="M0 4.5 H5.7 M3 1.8 L5.7 4.5 L3 7.2" fill="none" stroke="#1e8ad6" stroke-width="1.15"/></svg>
<div class="t" style="left:412px;top:79px;font-size:11px;color:#3b3a39;transform:rotate(-45deg);transform-origin:50% 50%;width:14px;height:11px">ab</div>
<svg class="a" style="left:416px;top:82px;" width="13" height="13" viewBox="0 0 13 13"><path d="M1 12 L11.5 1.5 M6.5 1.5 H11.5 V6.5" fill="none" stroke="#1e8ad6" stroke-width="1.2"/></svg>
<svg class="a" style="left:432.5px;top:86px;" width="6" height="3.5" viewBox="0 0 6 3.5"><path d="M0.5 0.5 L3.0 3.0 L5.5 0.5" fill="none" stroke="#3b3a39" stroke-width="1.2"/></svg>
<div class="a" style="left:459px;top:74px;width:1px;height:59px;background:#c8c6c4;"></div>
<div class="t" style="left:469.50px;top:78.00px;font-size:10px;color:#3b3a39;letter-spacing:0.3px;">ab</div>
<div class="t" style="left:469.50px;top:86.00px;font-size:10px;color:#3b3a39;">c</div>
<svg class="a" style="left:474px;top:86px;" width="10" height="7" viewBox="0 0 10 7"><path d="M8.5 0.5 Q9.5 4.5 2 4.5 M4 2 L1.5 4.5 L4 7" fill="none" stroke="#1e8ad6" stroke-width="1.3"/></svg>
<svg class="a" style="left:467px;top:111px;" width="16" height="16" viewBox="0 0 16 16"><rect x="0.5" y="0.5" width="14" height="14" fill="#fff" stroke="#3b3a39" stroke-width="1.1"/><path d="M7.5 0.5 V3.5 M7.5 11.5 V14.5" stroke="#3b3a39" stroke-width="1"/><rect x="1" y="3.5" width="13" height="8" fill="#fff" stroke="#1e8ad6" stroke-width="1.1"/><path d="M3 7.5 H12 M5 5.5 L3 7.5 L5 9.5 M10 5.5 L12 7.5 L10 9.5" fill="none" stroke="#1e8ad6" stroke-width="1.1"/></svg>
<svg class="a" style="left:489.5px;top:117.5px;" width="6" height="3.5" viewBox="0 0 6 3.5"><path d="M0.5 0.5 L3.0 3.0 L5.5 0.5" fill="none" stroke="#3b3a39" stroke-width="1.2"/></svg>
<svg class="a" style="left:648px;top:87px;" width="6" height="3.5" viewBox="0 0 6 3.5"><path d="M0.5 0.5 L3.0 3.0 L5.5 0.5" fill="none" stroke="#3b3a39" stroke-width="1.2"/></svg>
<svg class="a" style="left:524px;top:111px;" width="9" height="16" viewBox="0 0 9 16"><path d="M7.3 3.3 Q6.5 1.8 4.3 1.8 Q1.3 1.8 1.3 4.5 Q1.3 6.6 4.3 7.5 Q7.6 8.5 7.6 11 Q7.6 13.6 4.4 13.6 Q1.8 13.6 0.8 11.8 M4.4 0 V16" fill="none" stroke="#3b3a39" stroke-width="1.15"/></svg>
<svg class="a" style="left:543.5px;top:117.5px;" width="6" height="3.5" viewBox="0 0 6 3.5"><path d="M0.5 0.5 L3.0 3.0 L5.5 0.5" fill="none" stroke="#3b3a39" stroke-width="1.2"/></svg>
<div class="t" style="left:560.60px;top:112.00px;font-size:17px;color:#3b3a39;">%</div>
<div class="t" style="left:584.00px;top:114.00px;font-size:9.529411764705882px;color:#777777;letter-spacing:-0.700px;">000</div>
<div class="a" style="left:607px;top:109px;width:1px;height:21px;background:#c8c6c4;"></div>
<svg class="a" style="left:614px;top:111px;" width="11" height="9" viewBox="0 0 11 9"><path d="M10 4.5 H1.5 M4.5 1.2 L1.2 4.5 L4.5 7.8" fill="none" stroke="#1e8ad6" stroke-width="1.4"/></svg>
<div class="t" style="left:623.80px;top:111.00px;font-size:9px;color:#3b3a39;letter-spacing:-0.3px;">,0</div>
<div class="t" style="left:619.00px;top:119.00px;font-size:9px;color:#3b3a39;letter-spacing:-0.3px;">,00</div>
<div class="t" style="left:643.00px;top:111.00px;font-size:9px;color:#3b3a39;letter-spacing:-0.3px;">,00</div>
<svg class="a" style="left:638px;top:118px;" width="11" height="9" viewBox="0 0 11 9"><path d="M1 4.5 H9.5 M6.2 1.2 L9.5 4.5 L6.2 7.8" fill="none" stroke="#1e8ad6" stroke-width="1.4"/></svg>
<div class="t" style="left:649.80px;top:119.00px;font-size:9px;color:#3b3a39;">0</div>
<svg class="a" style="left:698px;top:74px;" width="30" height="24" viewBox="0 0 30 24"><rect x="1.5" y="1.5" width="27" height="21" fill="#fff" stroke="#3b3a39" stroke-width="1.1"/><path d="M1.5 8.5 H28.5 M1.5 15.5 H28.5 M23.5 1.5 V22.5" stroke="#555" stroke-width="1"/><rect x="6.5" y="1.5" width="12" height="7" fill="#f7a1a8" stroke="#e8201c" stroke-width="1.1"/><rect x="6.5" y="8.5" width="8" height="7" fill="#8cc4f4" stroke="#1565c0" stroke-width="1.1"/><rect x="6.5" y="15.5" width="14" height="7" fill="#f7a1a8" stroke="#e8201c" stroke-width="1.1"/></svg>
<svg class="a" style="left:775px;top:74px;" width="34" height="30" viewBox="0 0 34 30"><rect x="1.5" y="1.5" width="27" height="21" fill="#fff" stroke="#3b3a39" stroke-width="1.1"/><path d="M1.5 8.5 H10.5 M1.5 15.5 H10.5 M10.5 1.5 V8.5 M19.5 1.5 V8.5" stroke="#555" stroke-width="1"/><rect x="10.5" y="8.5" width="18" height="14" fill="#8cc4f4" stroke="#1565c0" stroke-width="1.1"/><path d="M10.5 15.5 H28.5 M19.5 8.5 V22.5" stroke="#1565c0" stroke-width="1.1"/><path d="M16 23.2 L28.9 9.5" stroke="#f3f2f1" stroke-width="3.2"/><path d="M29.2 7.6 Q31.8 6.6 31.2 9.2 L20.5 21.2 L17.8 18.8 Z" fill="#fff" stroke="#3b3a39" stroke-width="0.9" stroke-linejoin="round"/><path d="M8.3 25.6 Q11.5 25.2 13.2 22.6 Q15.3 19.6 18.2 20.3 Q20.8 21.8 19.7 24.6 Q17.6 28.2 12.2 27.9 Q9.6 27.6 8.3 25.6Z" fill="#8cc4f4" stroke="#1565c0" stroke-width="1.1" stroke-linejoin="round"/></svg>
<svg class="a" style="left:840px;top:74px;" width="34" height="30" viewBox="0 0 34 30"><rect x="1.5" y="1.5" width="27" height="21" fill="#fff" stroke="#3b3a39" stroke-width="1.1"/><path d="M1.5 6.5 H28.5 M1.5 17.5 H6.5 M6.5 1.5 V22.5 M23.5 1.5 V6.5" stroke="#555" stroke-width="1"/><rect x="6.5" y="6.5" width="17" height="11" fill="#8cc4f4" stroke="#1565c0" stroke-width="1.1"/><path d="M15 24 L28.9 9.5" stroke="#f3f2f1" stroke-width="3.2"/><path d="M29.2 7.6 Q31.8 6.6 31.2 9.2 L20.5 21.2 L17.8 18.8 Z" fill="#fff" stroke="#3b3a39" stroke-width="0.9" stroke-linejoin="round"/><path d="M8.3 25.6 Q11.5 25.2 13.2 22.6 Q15.3 19.6 18.2 20.3 Q20.8 21.8 19.7 24.6 Q17.6 28.2 12.2 27.9 Q9.6 27.6 8.3 25.6Z" fill="#8cc4f4" stroke="#1565c0" stroke-width="1.1" stroke-linejoin="round"/></svg>
<svg class="a" style="left:742px;top:127px;" width="6" height="3.5" viewBox="0 0 6 3.5"><path d="M0.5 0.5 L3.0 3.0 L5.5 0.5" fill="none" stroke="#3b3a39" stroke-width="1.2"/></svg>
<svg class="a" style="left:818px;top:127px;" width="6" height="3.5" viewBox="0 0 6 3.5"><path d="M0.5 0.5 L3.0 3.0 L5.5 0.5" fill="none" stroke="#3b3a39" stroke-width="1.2"/></svg>
<svg class="a" style="left:866.5px;top:127px;" width="6" height="3.5" viewBox="0 0 6 3.5"><path d="M0.5 0.5 L3.0 3.0 L5.5 0.5" fill="none" stroke="#3b3a39" stroke-width="1.2"/></svg>
<svg class="a" style="left:901px;top:71px;" width="17" height="15" viewBox="0 0 17 15"><path d="M0.5 0.5 H15.5 V13.5 H0.5 Z M0.5 4.8 H15.5 M0.5 9.2 H15.5 M5.5 0.5 V13.5 M10.5 0.5 V13.5" fill="none" stroke="#3b3a39" stroke-width="1"/><rect x="5.5" y="4.8" width="10" height="4.4" fill="#86b6e6" stroke="#1e8ad6" stroke-width="1.1"/><path d="M0 7 H7 M3 4 L0.5 7 L3 10" fill="none" stroke="#1e8ad6" stroke-width="1.3"/></svg>
<svg class="a" style="left:901px;top:94px;" width="17" height="15" viewBox="0 0 17 15"><path d="M0.5 0.5 H15.5 V13.5 H0.5 Z M0.5 4.8 H15.5 M0.5 9.2 H15.5 M5.5 0.5 V13.5 M10.5 0.5 V13.5" fill="none" stroke="#3b3a39" stroke-width="1"/><rect x="0.5" y="4.8" width="15" height="4.4" fill="#f3f2f1" stroke="none"/><rect x="3" y="4" width="6" height="6" fill="#86b6e6" stroke="#1e8ad6" stroke-width="1.1"/><path d="M11 4.5 L15.5 9.5 M15.5 4.5 L11 9.5" stroke="#e02b2b" stroke-width="1.2"/></svg>
<svg class="a" style="left:901px;top:115px;" width="17" height="17" viewBox="0 0 17 17"><path d="M0.5 3.5 H15.5 V16.5 H0.5 Z M0.5 7.8 H15.5 M0.5 12.2 H15.5 M5.5 3.5 V16.5 M10.5 3.5 V16.5" fill="none" stroke="#3b3a39" stroke-width="1"/><rect x="4" y="7.8" width="8" height="4.4" fill="#86b6e6" stroke="#1e8ad6" stroke-width="1.1"/><path d="M3 1.5 H13 M3 0 V3 M13 0 V3" fill="none" stroke="#1e8ad6" stroke-width="1.1"/></svg>
<svg class="a" style="left:969.5px;top:77px;" width="6" height="3.5" viewBox="0 0 6 3.5"><path d="M0.5 0.5 L3.0 3.0 L5.5 0.5" fill="none" stroke="#3b3a39" stroke-width="1.2"/></svg>
<svg class="a" style="left:974px;top:100px;" width="6" height="3.5" viewBox="0 0 6 3.5"><path d="M0.5 0.5 L3.0 3.0 L5.5 0.5" fill="none" stroke="#3b3a39" stroke-width="1.2"/></svg>
<svg class="a" style="left:969px;top:123px;" width="6" height="3.5" viewBox="0 0 6 3.5"><path d="M0.5 0.5 L3.0 3.0 L5.5 0.5" fill="none" stroke="#3b3a39" stroke-width="1.2"/></svg>
<svg class="a" style="left:1006px;top:71px;" width="14" height="14" viewBox="0 0 14 14"><path d="M13 2.5 V1 H1 L7 7 L1 13 H13 V11.5" fill="none" stroke="#3b3a39" stroke-width="1.2"/></svg>
<svg class="a" style="left:1027.5px;top:77px;" width="6" height="3.5" viewBox="0 0 6 3.5"><path d="M0.5 0.5 L3.0 3.0 L5.5 0.5" fill="none" stroke="#3b3a39" stroke-width="1.2"/></svg>
<svg class="a" style="left:1005px;top:94px;" width="17" height="14" viewBox="0 0 17 14"><rect x="0.5" y="0.5" width="15.5" height="13" fill="#fff" stroke="#3b3a39" stroke-width="1.1"/><path d="M0.5 2.5 H16" stroke="#3b3a39" stroke-width="1"/><path d="M8 4.5 V10.5 M5.5 8 L8 10.5 L10.5 8" fill="none" stroke="#1e8ad6" stroke-width="1.2"/></svg>
<svg class="a" style="left:1025.5px;top:100px;" width="6" height="3.5" viewBox="0 0 6 3.5"><path d="M0.5 0.5 L3.0 3.0 L5.5 0.5" fill="none" stroke="#3b3a39" stroke-width="1.2"/></svg>
<svg class="a" style="left:1005px;top:116px;" width="16" height="16" viewBox="0 0 16 16"><path d="M1 10 L10 1 L15 6 L6 15 Z" fill="#fff" stroke="#b146c2" stroke-width="1.3"/><path d="M1 10 L4.5 6.5 L9.5 11.5 L6 15 Z" fill="#d59ee0" stroke="#b146c2" stroke-width="1.3"/></svg>
<svg class="a" style="left:1025.5px;top:123px;" width="6" height="3.5" viewBox="0 0 6 3.5"><path d="M0.5 0.5 L3.0 3.0 L5.5 0.5" fill="none" stroke="#3b3a39" stroke-width="1.2"/></svg>
<div class="t" style="left:1053.80px;top:72.00px;font-size:15.5px;color:#1e8ad6;">A</div>
<div class="t" style="left:1054.20px;top:86.00px;font-size:15.5px;color:#3b3a39;">Z</div>
<svg class="a" style="left:1066px;top:79px;" width="16" height="16" viewBox="0 0 16 16"><path d="M0.5 0.5 H15.5 V2 L9.5 8.5 V15.5 H6.5 V8.5 L0.5 2 Z" fill="#fff" stroke="#3b3a39" stroke-width="1.1"/></svg>
<svg class="a" style="left:1080.5px;top:127px;" width="6" height="3.5" viewBox="0 0 6 3.5"><path d="M0.5 0.5 L3.0 3.0 L5.5 0.5" fill="none" stroke="#3b3a39" stroke-width="1.2"/></svg>
<svg class="a" style="left:1119px;top:71px;" width="31" height="31" viewBox="0 0 31 31"><circle cx="18.5" cy="11.5" r="10.5" fill="#fafafa" stroke="#3b3a39" stroke-width="1.2"/><path d="M11 19 L1 29.5" stroke="#3b3a39" stroke-width="1.2"/></svg>
<svg class="a" style="left:1162.5px;top:127px;" width="6" height="3.5" viewBox="0 0 6 3.5"><path d="M0.5 0.5 L3.0 3.0 L5.5 0.5" fill="none" stroke="#3b3a39" stroke-width="1.2"/></svg>
<svg class="a" style="left:1211px;top:73px;" width="28" height="30" viewBox="0 0 28 30"><path d="M11 24 H3.5 Q1.5 24 1.5 22 V3 Q1.5 1.3 3.5 1.3 H14 L19.6 6.8 V14.5" fill="none" stroke="#2a6ad9" stroke-width="1.4" stroke-linejoin="round"/><path d="M9.8 7 Q10.6 10.8 7 15.5 M9.6 11 L14.6 14.2 M12.8 13 L14.6 14.2 L13.6 15.8" fill="none" stroke="#2a6ad9" stroke-width="0.9"/><rect x="17.5" y="14.8" width="9.5" height="4.6" rx="2.3" transform="rotate(-45 22.2 17.1)" fill="none" stroke="#2a6ad9" stroke-width="1.4"/><rect x="12.3" y="20.2" width="9.5" height="4.6" rx="2.3" transform="rotate(-45 17 22.5)" fill="none" stroke="#2a6ad9" stroke-width="1.4"/></svg>
<svg class="a" style="left:1347px;top:150px;" width="11" height="7" viewBox="0 0 11 7"><path d="M0.5 6 L5.5 1 L10.5 6" fill="none" stroke="#3b3a39" stroke-width="1.2"/></svg>
<svg class="a" style="left:93px;top:181px;" width="8" height="5" viewBox="0 0 8 5"><path d="M0 0 H7.5 L3.75 4.5Z" fill="#777"/></svg>
<svg class="a" style="left:121px;top:178px;" width="3" height="12" viewBox="0 0 3 12"><circle cx="1.5" cy="1.5" r="1.1" fill="#999"/><circle cx="1.5" cy="6" r="1.1" fill="#999"/><circle cx="1.5" cy="10.5" r="1.1" fill="#999"/></svg>
<svg class="a" style="left:150px;top:179px;" width="12" height="11" viewBox="0 0 12 11"><path d="M1 1 L11 10 M11 1 L1 10" stroke="#b5b5b5" stroke-width="1.3"/></svg>
<svg class="a" style="left:185px;top:179px;" width="14" height="11" viewBox="0 0 14 11"><path d="M1 6 L5 10 L13.5 1" fill="none" stroke="#c0c0c0" stroke-width="1.8"/></svg>
<div class="t" style="left:222px;top:177px;font-size:13px;font-family:'Liberation Serif',serif;font-style:italic;font-weight:bold;color:#555">f<span style="font-size:10px">x</span></div>
<svg class="a" style="left:1348px;top:181px;" width="8" height="5" viewBox="0 0 8 5"><path d="M0.5 0.5 L4 4 L7.5 0.5" fill="none" stroke="#666" stroke-width="1.4"/></svg>
<svg class="a" style="left:51px;top:711px;" width="15" height="13" viewBox="0 0 15 13"><path d="M6 12.5 H0.5 V0.5 H13.5 V5" fill="none" stroke="#3b3a39" stroke-width="1.1"/><path d="M0.5 2.5 H13.5" stroke="#3b3a39" stroke-width="1.1"/><path d="M2.5 4.5 H4.5 M2.5 6.5 H4.5 M2.5 8.5 H4.5" stroke="#3b3a39" stroke-width="0.9"/><circle cx="10" cy="8.8" r="4" fill="#f3f2f1" stroke="#3b3a39" stroke-width="1.1"/><rect x="8.6" y="7.4" width="2.8" height="2.8" fill="#3b3a39"/></svg>
<svg class="a" style="left:83px;top:710px;" width="15" height="15" viewBox="0 0 15 15"><circle cx="6.5" cy="2.2" r="1.7" fill="none" stroke="#3b3a39" stroke-width="1"/><path d="M1 3.5 Q3 5.5 5 5.5 H8 Q10 5.5 12 3.5 M5 5.5 V9 L3.5 13.5 M8 5.5 V8 M6.5 10 L8 13.5" fill="none" stroke="#3b3a39" stroke-width="1.1"/><path d="M10 8.5 Q10.5 6.5 12 6.8 Q13.8 7 13.3 8.8 Q12.8 10 11.8 10.5 V11.5 M11.8 12.8 V13.8" fill="none" stroke="#3b3a39" stroke-width="1"/></svg>
<svg class="a" style="left:1079px;top:710px;" width="13" height="13" viewBox="0 0 13 13"><path d="M0.5 0.5 H12.5 V12.5 H0.5 Z M0.5 4.5 H12.5 M0.5 8.5 H12.5 M4.5 0.5 V12.5 M8.5 0.5 V12.5" fill="none" stroke="#3b3a39" stroke-width="1.1"/></svg>
<svg class="a" style="left:1119px;top:710px;" width="14" height="13" viewBox="0 0 14 13"><rect x="0.5" y="0.5" width="13" height="12" fill="none" stroke="#3b3a39" stroke-width="1.1"/><rect x="3" y="2.5" width="8" height="8" fill="none" stroke="#3b3a39" stroke-width="1"/><path d="M5 4.5 H9 M5 6.5 H9 M5 8.5 H9" stroke="#3b3a39" stroke-width="0.9"/></svg>
<svg class="a" style="left:1159px;top:710px;" width="14" height="13" viewBox="0 0 14 13"><path d="M0.5 0.5 H13.5 V12.5 H0.5 Z M0.5 7.5 H8 V0.5 M3.5 0.5 V7.5 M5.5 0.5 V7.5" fill="none" stroke="#3b3a39" stroke-width="1.1"/></svg>
<div class="a" style="left:0px;top:706px;width:1366px;height:1px;background:#c6c6c6;"></div>
<svg class="a" style="left:15px;top:740px;" width="18" height="17" viewBox="0 0 18 17"><path d="M0 2.3 L7.5 1.3 V7.8 H0Z M8.5 1.2 L17.5 0 V7.8 H8.5Z M0 8.8 H7.5 V15.3 L0 14.3Z M8.5 8.8 H17.5 V16.5 L8.5 15.4Z" fill="#fff"/></svg>
<svg class="a" style="left:61px;top:737px;" width="23" height="23" viewBox="0 0 23 23"><circle cx="14.5" cy="8.5" r="7" fill="none" stroke="#fff" stroke-width="2"/><path d="M9.5 13.5 L1.5 21.5" stroke="#fff" stroke-width="2.2" stroke-linecap="round"/></svg>
<svg class="a" style="left:110px;top:736px;" width="26" height="24" viewBox="0 0 26 24"><defs><linearGradient id="cp1" x1="0" y1="0" x2="0" y2="1"><stop offset="0" stop-color="#22a8f8"/><stop offset="0.5" stop-color="#38c08a"/><stop offset="1" stop-color="#f8d010"/></linearGradient><linearGradient id="cp2" x1="0" y1="0" x2="0" y2="1"><stop offset="0" stop-color="#b060f0"/><stop offset="0.55" stop-color="#f25890"/><stop offset="1" stop-color="#faa840"/></linearGradient></defs><path d="M12 2 H19 Q20.3 2 20.8 3.6 L22 7.5 H17.5 L16 4 Z" fill="#1d5ee0"/><path d="M7.5 16.5 H11 L13.8 22 H10.5 Q9 22 8.5 20.5Z" fill="#f56a40"/><path d="M8 2 H14.3 Q15.6 2 15.2 3.4 L11.3 15.3 Q10.9 16.5 9.6 16.5 H3.3 Q1.9 16.5 2.3 15.1 L6.2 3.3 Q6.6 2 8 2Z" fill="url(#cp1)"/><path d="M19.2 7.5 H23.8 Q25.2 7.5 24.8 8.9 L20.8 20.7 Q20.4 22 19 22 H13.4 Q12 22 12.4 20.6 L16.4 8.7 Q16.8 7.5 18.2 7.5Z" fill="url(#cp2)"/></svg>
<svg class="a" style="left:160px;top:736px;" width="24" height="23" viewBox="0 0 24 23"><defs><radialGradient id="ie" cx="0.4" cy="0.35" r="0.7"><stop offset="0" stop-color="#b8ecff"/><stop offset="1" stop-color="#1a8fd8"/></radialGradient></defs><path d="M12.5 4 Q20 4 20.5 12.5 H8.5 Q9 16 12.5 16 Q15 16 16.5 14.5 H20.5 Q19 20.5 12.5 20.5 Q4.5 20.5 4.5 12.3 Q4.5 4 12.5 4Z M8.5 10 H16.5 Q16 7 12.5 7 Q9 7 8.5 10Z" fill="url(#ie)" fill-rule="evenodd"/><path d="M3 22 Q-1 20 6 11 Q15 1 21 1 Q24 1.5 21.5 6" fill="none" stroke="#f2c20f" stroke-width="1.8"/></svg>
<svg class="a" style="left:208px;top:735px;" width="26" height="26" viewBox="0 0 26 26"><defs><linearGradient id="ed1" x1="0" y1="1" x2="1" y2="0.2"><stop offset="0" stop-color="#1478e0"/><stop offset="0.45" stop-color="#28b4e4"/><stop offset="1" stop-color="#62e84a"/></linearGradient></defs><circle cx="13" cy="13" r="12.2" fill="url(#ed1)"/><path d="M0.9 12 Q1.5 6.5 8 6.5 Q12.5 6.8 12.5 10 Q10 11 10.5 14 Q11.5 17.5 16 18 Q20.5 18.3 24.2 17 Q21 25 13 25.2 Q1 25 0.9 12Z" fill="#1466d0"/><path d="M1.2 13 Q1.5 8 6.5 8 Q3 11 4.5 17 Q6 22 12 25 Q2 23.5 1.2 13Z" fill="#168ae8" opacity="0.8"/><circle cx="12.3" cy="13.2" r="2.6" fill="#1c1c1c"/><path d="M12.5 15.6 Q17.5 18.8 24.5 17.2" fill="none" stroke="#1c1c1c" stroke-width="1.2"/></svg>
<svg class="a" style="left:258px;top:736px;" width="24" height="24" viewBox="0 0 24 24"><defs><linearGradient id="ol" x1="0" y1="0" x2="1" y2="1"><stop offset="0" stop-color="#7cc8ff"/><stop offset="1" stop-color="#2a6de0"/></linearGradient></defs><path d="M3 8 L13 1 L23 8 V20 Q23 22.5 20.5 22.5 H5.5 Q3 22.5 3 20Z" fill="url(#ol)"/><path d="M7 12 L17 4 L23 8 L13 15Z" fill="#4b63d8" opacity="0.8"/><rect x="0" y="10.5" width="10.5" height="10.5" rx="1.5" fill="#1b5fd0"/><circle cx="5.25" cy="15.75" r="2.9" fill="none" stroke="#fff" stroke-width="1.6"/></svg>
<svg class="a" style="left:306px;top:735px;" width="28" height="28" viewBox="0 0 28 28"><circle cx="12.5" cy="12" r="11.5" fill="#e8463b"/><path d="M12.5 12 L2.5 17.8 A11.5 11.5 0 0 0 16 22.95Z" fill="#2ea44f"/><path d="M12.5 12 L22.5 6.2 A11.5 11.5 0 0 1 16 22.95Z" fill="#f6c027"/><circle cx="12.5" cy="12" r="5" fill="#fff"/><circle cx="12.5" cy="12" r="4" fill="#3a7fe8"/><circle cx="19.5" cy="19.5" r="7" fill="#2a6fe0" stroke="#fff" stroke-width="1"/><circle cx="19.5" cy="19.5" r="5" fill="none" stroke="#fff" stroke-width="1"/><circle cx="19.5" cy="18" r="1.6" fill="none" stroke="#fff" stroke-width="1"/><path d="M16.8 22.5 Q19.5 19.8 22.2 22.5" fill="none" stroke="#fff" stroke-width="1"/></svg>
<svg class="a" style="left:356px;top:735px;" width="24" height="25" viewBox="0 0 24 25"><defs><radialGradient id="ff" cx="0.5" cy="0.3" r="0.8"><stop offset="0" stop-color="#ffe04a"/><stop offset="0.5" stop-color="#ff8a1a"/><stop offset="1" stop-color="#e8205a"/></radialGradient></defs><path d="M12 24 Q1 24 0.5 13.5 Q0.5 8 4 4.5 Q4 8 6 9 Q7.5 4 12 3 Q15 1 16 0 Q16.5 3 19 5 Q23.5 9 23 14 Q22.5 24 12 24Z" fill="url(#ff)"/><circle cx="12" cy="14" r="5.2" fill="#7b3fd8"/><path d="M5 11 Q8 8.5 12 9 Q8 10 7.5 13Z" fill="#ff9a20"/></svg>
<svg class="a" style="left:405px;top:738px;" width="23" height="19" viewBox="0 0 23 19"><path d="M0.5 1 H8 L10 3 H22.5 V18.5 H0.5Z" fill="#f8d775"/><path d="M0.5 1 H8 L10 3 H0.5Z" fill="#e0a820"/><path d="M0.5 4.5 H22.5" stroke="#eab93a" stroke-width="1"/><path d="M5.5 18.5 V12 H17.5 V18.5 H14.5 V15 H8.5 V18.5Z" fill="#3d8fe0"/></svg>
<svg class="a" style="left:455px;top:737px;" width="22" height="21" viewBox="0 0 22 21"><rect x="0" y="0" width="21.5" height="20.5" rx="3.5" fill="#c4100a"/><path d="M10.5 3.5 Q12 3.5 11.5 7 Q10.5 11 7 15.5 Q4.5 18 4.3 16.5 Q4.5 15 9 13 Q13 11.5 16.5 12.5 Q18.5 13 17.5 14 Q16 15 13 12.5 Q10.5 10 9.8 6.5 Q9.5 3.5 10.5 3.5Z" fill="none" stroke="#fff" stroke-width="1.3"/></svg>
<svg class="a" style="left:502px;top:737px;" width="26" height="22" viewBox="0 0 26 22"><rect x="6.5" y="0" width="18.5" height="21.5" rx="1" fill="#2b7cd3"/><rect x="6.5" y="0" width="18.5" height="5.5" rx="1" fill="#41a5ee"/><rect x="6.5" y="10.7" width="18.5" height="5.4" fill="#185abd"/><rect x="6.5" y="16" width="18.5" height="5.5" rx="1" fill="#103f91"/><rect x="0.5" y="5" width="12.5" height="11.5" rx="1" fill="#185abd"/><text x="6.75" y="14.5" font-family="Liberation Sans" font-weight="bold" font-size="9.5" fill="#fff" text-anchor="middle">W</text></svg>
<svg class="a" style="left:551px;top:737px;" width="26" height="22" viewBox="0 0 26 22"><rect x="6.5" y="0" width="18.5" height="21.5" rx="1" fill="#21a366"/><rect x="6.5" y="0" width="18.5" height="5.5" rx="1" fill="#33c481"/><rect x="15.5" y="5.5" width="9.5" height="5.3" fill="#33c481"/><rect x="6.5" y="10.7" width="18.5" height="5.4" fill="#107c41"/><rect x="6.5" y="16" width="18.5" height="5.5" rx="1" fill="#185c37"/><rect x="0.5" y="5" width="12.5" height="11.5" rx="1" fill="#107c41"/><text x="6.75" y="14.5" font-family="Liberation Sans" font-weight="bold" font-size="9.5" fill="#fff" text-anchor="middle">X</text></svg>
<div class="a" style="left:585px;top:728px;width:3px;height:38px;background:#5a5a5a;"></div>
<svg class="a" style="left:1123px;top:744px;" width="13" height="8" viewBox="0 0 13 8"><path d="M0.8 7.2 L6.5 1.2 L12.2 7.2" fill="none" stroke="#fff" stroke-width="1.3"/></svg>
<svg class="a" style="left:1144px;top:741px;" width="18" height="14" viewBox="0 0 18 14"><path d="M1 4.5 H4 L8 1 V13 L4 9.5 H1Z" fill="none" stroke="#fff" stroke-width="1.1"/><path d="M10.5 4.5 Q12 7 10.5 9.5 M12.8 3 Q15 7 12.8 11 M15 1.5 Q18 7 15 12.5" fill="none" stroke="#fff" stroke-width="1" opacity="0.85"/></svg>
<svg class="a" style="left:1172px;top:741px;" width="14" height="15" viewBox="0 0 14 15"><path d="M1 13.5 Q1 5 9.5 3 M4 13.5 Q4 7.5 10 6 M7 13.5 Q7 10 10.5 9" fill="none" stroke="#fff" stroke-width="1.1"/><circle cx="11.5" cy="12.5" r="1.5" fill="#fff"/></svg>
<svg class="a" style="left:1195px;top:740px;" width="13" height="16" viewBox="0 0 13 16"><path d="M2.5 1 Q6 -0.5 9.5 1 M2.5 15 Q6 16.5 9.5 15" fill="none" stroke="#fff" stroke-width="1"/><rect x="1" y="4.5" width="7.5" height="7" rx="1.2" fill="none" stroke="#fff" stroke-width="1.1"/><path d="M8.5 7 L11.5 5 V11 L8.5 9" fill="none" stroke="#fff" stroke-width="1.1"/></svg>
<svg class="a" style="left:1325px;top:739px;" width="26" height="26" viewBox="0 0 26 26"><path d="M0.5 0.5 H16 V13.5 H10 L7 16.5 V13.5 H0.5Z" fill="#fff"/><path d="M3.5 4.5 H13 M3.5 7.5 H13 M3.5 10.5 H10" stroke="#1c1c1c" stroke-width="1"/><circle cx="15.7" cy="16.4" r="8" fill="#2b2b2b" stroke="#8a8a8a" stroke-width="1"/></svg>
<div class="t" style="left:1337.90px;top:749.00px;font-size:12px;color:#ffffff;">7</div>
<div class="a" style="left:1361px;top:728px;width:1px;height:40px;background:#5a5a5a;"></div>
</body></html>
